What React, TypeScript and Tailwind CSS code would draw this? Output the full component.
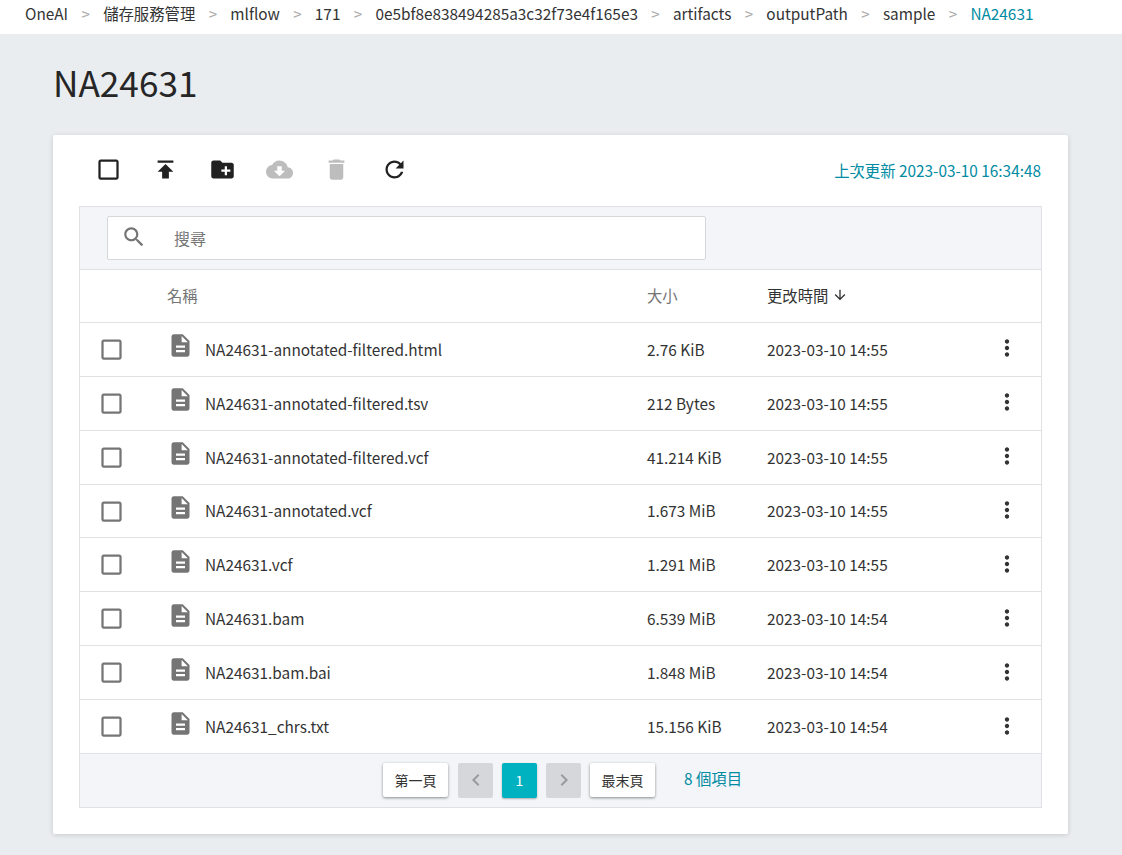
import type { ReactNode } from "react";

const ICONS = {
  checkbox:
    "M19 5v14H5V5h14m0-2H5c-1.1 0-2 .9-2 2v14c0 1.1.9 2 2 2h14c1.1 0 2-.9 2-2V5c0-1.1-.9-2-2-2z",
  publish: "M5 4v2h14V4H5zm0 10h4v6h6v-6h4l-7-7-7 7z",
  newFolder:
    "M20 6h-8l-2-2H4c-1.11 0-1.99.89-1.99 2L2 18c0 1.11.89 2 2 2h16c1.11 0 2-.89 2-2V8c0-1.11-.89-2-2-2zm-1 8h-3v3h-2v-3h-3v-2h3V9h2v3h3v2z",
  download:
    "M19.35 10.04C18.67 6.59 15.64 4 12 4 9.11 4 6.6 5.64 5.35 8.04 2.34 8.36 0 10.91 0 14c0 3.31 2.69 6 6 6h13c2.76 0 5-2.24 5-5 0-2.64-2.05-4.78-4.65-4.96zM17 13l-5 5-5-5h3V9h4v4h3z",
  trash: "M6 19c0 1.1.9 2 2 2h8c1.1 0 2-.9 2-2V7H6v12zM19 4h-3.5l-1-1h-5l-1 1H5v2h14V4z",
  refresh:
    "M17.65 6.35C16.2 4.9 14.21 4 12 4c-4.42 0-7.99 3.58-7.99 8s3.57 8 7.99 8c3.73 0 6.84-2.55 7.73-6h-2.08c-.82 2.33-3.04 4-5.65 4-3.31 0-6-2.69-6-6s2.69-6 6-6c1.66 0 3.14.69 4.22 1.78L13 11h7V4l-2.35 2.35z",
  file: "M14 2H6c-1.1 0-1.99.9-1.99 2L4 20c0 1.1.89 2 1.99 2H18c1.1 0 2-.9 2-2V8l-6-6zm2 16H8v-2h8v2zm0-4H8v-2h8v2zm-3-5V3.5L18.5 9H13z",
  more: "M12 8c1.1 0 2-.9 2-2s-.9-2-2-2-2 .9-2 2 .9 2 2 2zm0 2c-1.1 0-2 .9-2 2s.9 2 2 2 2-.9 2-2-.9-2-2-2zm0 6c-1.1 0-2 .9-2 2s.9 2 2 2 2-.9 2-2-.9-2-2-2z",
  search:
    "M15.5 14h-.79l-.28-.27C15.41 12.59 16 11.11 16 9.5 16 5.91 13.09 3 9.5 3S3 5.91 3 9.5 5.91 16 9.5 16c1.61 0 3.09-.59 4.23-1.57l.27.28v.79l5 4.99L20.49 19l-4.99-5zm-6 0C7.01 14 5 11.99 5 9.5S7.01 5 9.5 5 14 7.01 14 9.5 11.99 14 9.5 14z",
  arrowDown: "M20 12l-1.41-1.41L13 16.17V4h-2v12.17l-5.58-5.59L4 12l8 8 8-8z",
  left: "M15.41 7.41L14 6l-6 6 6 6 1.41-1.41L10.83 12z",
  right: "M10 6L8.59 7.41 13.17 12l-4.58 4.59L10 18l6-6z",
};

function Icon({ d, className }: { d: string; className: string }) {
  return (
    <svg viewBox="0 0 24 24" fill="currentColor" className={className}>
      <path d={d} />
    </svg>
  );
}

const crumbs = [
  "OneAI",
  "儲存服務管理",
  "mlflow",
  "171",
  "0e5bf8e838494285a3c32f73e4f165e3",
  "artifacts",
  "outputPath",
  "sample",
];

const files = [
  ["NA24631-annotated-filtered.html", "2.76 KiB", "2023-03-10 14:55"],
  ["NA24631-annotated-filtered.tsv", "212 Bytes", "2023-03-10 14:55"],
  ["NA24631-annotated-filtered.vcf", "41.214 KiB", "2023-03-10 14:55"],
  ["NA24631-annotated.vcf", "1.673 MiB", "2023-03-10 14:55"],
  ["NA24631.vcf", "1.291 MiB", "2023-03-10 14:55"],
  ["NA24631.bam", "6.539 MiB", "2023-03-10 14:54"],
  ["NA24631.bam.bai", "1.848 MiB", "2023-03-10 14:54"],
  ["NA24631_chrs.txt", "15.156 KiB", "2023-03-10 14:54"],
];

function PageButton({ children }: { children: ReactNode }) {
  return (
    <button className="w-[65px] h-[34px] bg-white rounded-[2px] text-[14px] text-[#333] shadow-[0_1px_3px_rgba(0,0,0,0.45)]">
      {children}
    </button>
  );
}

function ToolIcon({ d, muted }: { d: string; muted?: boolean }) {
  return (
    <div className={`w-[57.2px] flex justify-center ${muted ? "text-[#bdbdbd]" : "text-[#212121]"}`}>
      <Icon d={d} className="w-[27px] h-[27px]" />
    </div>
  );
}

export default function App() {
  return (
    <div className="min-h-[855px] bg-[#eaedf0] font-['Noto_Sans_CJK_TC','Noto_Sans',sans-serif] text-[#333]">
      <nav className="h-[34px] bg-white flex items-center pl-[25px] pb-[7px] text-[15.36px] leading-none text-[#333]">
        {crumbs.map((c) => (
          <span key={c} className="flex items-center">
            <span>{c}</span>
            <span className="w-[35px] text-center text-[#aaa] text-[15px]">&gt;</span>
          </span>
        ))}
        <span className="text-[#008ba3]">NA24631</span>
      </nav>

      <main className="pl-[53px] pr-[54px]">
        <h1 className="pt-[25px] h-[101px] text-[35.2px] leading-[46px] font-normal text-[#262626]">NA24631</h1>

        <section className="h-[699px] bg-white rounded-[2px] shadow-[0_1px_5px_rgba(0,0,0,0.15)] pl-[26px] pr-[26px]">
          <div className="h-[71px] flex items-center justify-between">
            <div className="flex items-center -mt-[2px] ml-[0.5px]">
              <ToolIcon d={ICONS.checkbox} />
              <ToolIcon d={ICONS.publish} />
              <ToolIcon d={ICONS.newFolder} />
              <ToolIcon d={ICONS.download} muted />
              <ToolIcon d={ICONS.trash} muted />
              <ToolIcon d={ICONS.refresh} />
            </div>
            <p className="text-[15.36px] text-[#008ba3] mr-px">上次更新 2023-03-10 16:34:48</p>
          </div>

          <div className="border border-[#dfe1e5]">
            <div className="h-[63px] bg-[#f3f5f9] border-b border-[#dfe1e5] pl-[27px] pt-[9px]">
              <div className="w-[599px] h-[44px] bg-white border border-[#d5d7db] rounded-[2px] flex items-center pl-[13px]">
                <Icon d={ICONS.search} className="w-[26px] h-[26px] text-[#757575] -mt-[3px]" />
                <span className="ml-[27px] text-[16px] text-[#757575] -mt-px">搜尋</span>
              </div>
            </div>

            <div className="h-[52.95px] border-b border-[#dfe1e5] flex items-center text-[15.36px] pb-px">
              <span className="ml-[87px] w-[480px] text-[#757575]">名稱</span>
              <span className="w-[120px] text-[#757575]">大小</span>
              <span className="flex items-center text-[#333]">
                更改時間
                <Icon d={ICONS.arrowDown} className="ml-[4px] w-[16px] h-[16px]" />
              </span>
            </div>

            {files.map(([name, size, time]) => (
              <div key={name} className="h-[53.875px] border-b border-[#dfe1e5] flex items-center text-[15.36px] text-[#333]">
                <Icon d={ICONS.checkbox} className="ml-[18px] w-[27px] h-[27px] text-[#757575]" />
                <Icon d={ICONS.file} className="ml-[42px] w-[27px] h-[27px] text-[#757575] -mt-[7px]" />
                <span className="ml-[11px] w-[442px]">{name}</span>
                <span className="w-[120px]">{size}</span>
                <span className="w-[227px]">{time}</span>
                <Icon d={ICONS.more} className="w-[26px] h-[26px] text-[#333] -mt-[2px]" />
              </div>
            ))}

            <div className="h-[53px] bg-[#f3f5f9] flex items-center pl-[303px]">
              <PageButton>第一頁</PageButton>
              <div className="ml-[10px] w-[35px] h-[35px] bg-[#d5d7db] rounded-[2px] flex items-center justify-center text-[#9a9a9a]">
                <Icon d={ICONS.left} className="w-[24px] h-[24px]" />
              </div>
              <div className="ml-[9px] w-[35px] h-[35px] bg-[#00b1bf] rounded-[2px] shadow-[0_1px_2px_rgba(0,0,0,0.3)] flex items-center justify-center text-white text-[14px]">
                1
              </div>
              <div className="ml-[9px] mr-[9px] w-[35px] h-[35px] bg-[#d5d7db] rounded-[2px] flex items-center justify-center text-[#9a9a9a]">
                <Icon d={ICONS.right} className="w-[24px] h-[24px]" />
              </div>
              <PageButton>最末頁</PageButton>
              <span className="ml-[29px] text-[15.36px] text-[#008ba3] -mt-[4px]">8 個項目</span>
            </div>
          </div>
        </section>
      </main>
    </div>
  );
}
